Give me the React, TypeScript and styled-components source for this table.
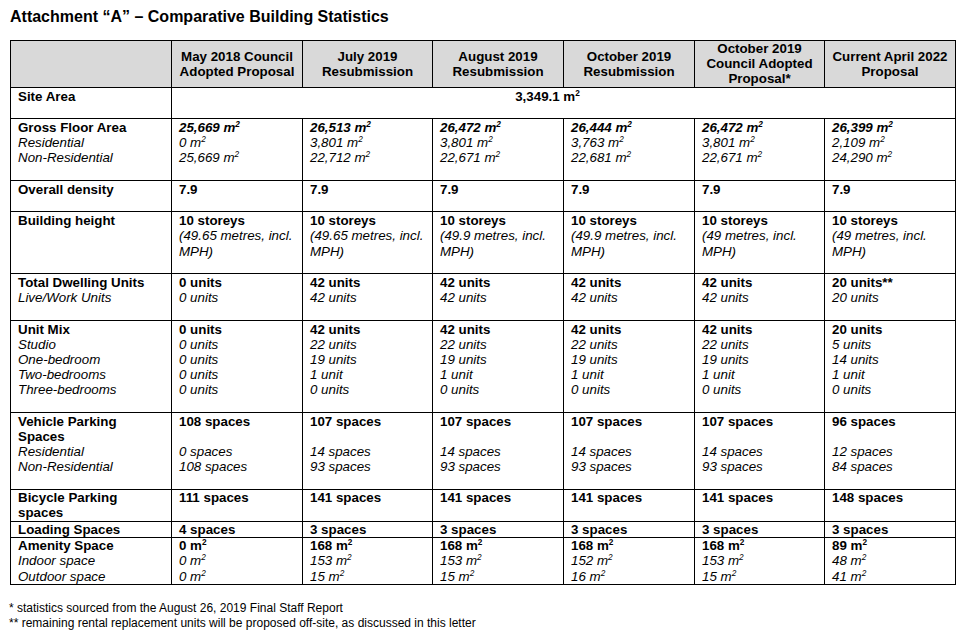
import { Fragment } from 'react';
import styled, { createGlobalStyle } from 'styled-components';

const GlobalStyle = createGlobalStyle`
  html, body {
    margin: 0;
    padding: 0;
    background: #ffffff;
  }
  body {
    font-family: 'Liberation Sans', Arial, sans-serif;
    color: #000000;
  }
`;

const Page = styled.div`
  padding: 8px 10px 0 10px;
  width: 966px;
  box-sizing: border-box;
`;

const Title = styled.h1`
  margin: 0 0 14px 0;
  font-size: 16px;
  line-height: 18px;
  font-weight: bold;
`;

const Table = styled.table`
  border-collapse: collapse;
  table-layout: fixed;
  width: 945px;
  font-size: 13.33px;
  line-height: 15.2px;
`;

const HeadCell = styled.th`
  background: #d9d9d9;
  border: 1px solid #000;
  padding: 0 6px;
  font-weight: bold;
  text-align: center;
  vertical-align: middle;
  white-space: nowrap;
`;

// spaced rows end with an empty line, as the source table does
const Cell = styled.td<{ $spaced?: boolean; $center?: boolean }>`
  border: 1px solid #000;
  padding: ${(p) => (p.$spaced ? '1px 7px 14.2px' : '0 7px 0.4px')};
  vertical-align: top;
  text-align: ${(p) => (p.$center ? 'center' : 'left')};
`;

const SiteValue = styled.span`
  display: inline-block;
  padding-right: 32px;
  font-weight: bold;
`;

const Line = styled.div<{ $bold?: boolean; $italic?: boolean }>`
  font-weight: ${(p) => (p.$bold ? 'bold' : 'normal')};
  font-style: ${(p) => (p.$italic ? 'italic' : 'normal')};
  min-height: 15.2px;
`;

const Sup = styled.sup`
  font-size: 0.62em;
  line-height: 0;
  vertical-align: 0.55em;
`;

const Notes = styled.div`
  margin-top: 16px;
  margin-left: -1px;
  font-size: 12px;
  line-height: 15px;
`;

// b = bold, i = italic, bi = bold italic, '' = blank line
type Style = 'b' | 'i' | 'bi' | '';
type Ln = [Style, string];

interface Row {
  label: Ln[];
  values: Ln[][];
  spaced?: boolean;
}

const same = (lines: Ln[]): Ln[][] => Array.from({ length: 6 }, () => lines);

const headers = [
  ['May 2018 Council', 'Adopted Proposal'],
  ['July 2019', 'Resubmission'],
  ['August 2019', 'Resubmission'],
  ['October 2019', 'Resubmission'],
  ['October 2019', 'Council Adopted', 'Proposal*'],
  ['Current April 2022', 'Proposal'],
];

const units = (top: string, a: string, b: string, c: string, d: string): Ln[] => [
  ['b', top],
  ['i', a],
  ['i', b],
  ['i', c],
  ['i', d],
];

const rows: Row[] = [
  {
    label: [
      ['b', 'Gross Floor Area'],
      ['i', 'Residential'],
      ['i', 'Non-Residential'],
    ],
    values: [
      [['bi', '25,669 m²'], ['i', '0 m²'], ['i', '25,669 m²']],
      [['bi', '26,513 m²'], ['i', '3,801 m²'], ['i', '22,712 m²']],
      [['bi', '26,472 m²'], ['i', '3,801 m²'], ['i', '22,671 m²']],
      [['bi', '26,444 m²'], ['i', '3,763 m²'], ['i', '22,681 m²']],
      [['bi', '26,472 m²'], ['i', '3,801 m²'], ['i', '22,671 m²']],
      [['bi', '26,399 m²'], ['i', '2,109 m²'], ['i', '24,290 m²']],
    ],
    spaced: true,
  },
  {
    label: [['b', 'Overall density']],
    values: same([['b', '7.9']]),
    spaced: true,
  },
  {
    label: [['b', 'Building height']],
    values: [
      [['b', '10 storeys'], ['i', '(49.65 metres, incl. MPH)']],
      [['b', '10 storeys'], ['i', '(49.65 metres, incl. MPH)']],
      [['b', '10 storeys'], ['i', '(49.9 metres, incl. MPH)']],
      [['b', '10 storeys'], ['i', '(49.9 metres, incl. MPH)']],
      [['b', '10 storeys'], ['i', '(49 metres, incl. MPH)']],
      [['b', '10 storeys'], ['i', '(49 metres, incl. MPH)']],
    ],
    spaced: true,
  },
  {
    label: [
      ['b', 'Total Dwelling Units'],
      ['i', 'Live/Work Units'],
    ],
    values: [
      [['b', '0 units'], ['i', '0 units']],
      [['b', '42 units'], ['i', '42 units']],
      [['b', '42 units'], ['i', '42 units']],
      [['b', '42 units'], ['i', '42 units']],
      [['b', '42 units'], ['i', '42 units']],
      [['b', '20 units**'], ['i', '20 units']],
    ],
    spaced: true,
  },
  {
    label: [
      ['b', 'Unit Mix'],
      ['i', 'Studio'],
      ['i', 'One-bedroom'],
      ['i', 'Two-bedrooms'],
      ['i', 'Three-bedrooms'],
    ],
    values: [
      units('0 units', '0 units', '0 units', '0 units', '0 units'),
      units('42 units', '22 units', '19 units', '1 unit', '0 units'),
      units('42 units', '22 units', '19 units', '1 unit', '0 units'),
      units('42 units', '22 units', '19 units', '1 unit', '0 units'),
      units('42 units', '22 units', '19 units', '1 unit', '0 units'),
      units('20 units', '5 units', '14 units', '1 unit', '0 units'),
    ],
    spaced: true,
  },
  {
    label: [
      ['b', 'Vehicle Parking Spaces'],
      ['i', 'Residential'],
      ['i', 'Non-Residential'],
    ],
    values: [
      [['b', '108 spaces'], ['', ''], ['i', '0 spaces'], ['i', '108 spaces']],
      [['b', '107 spaces'], ['', ''], ['i', '14 spaces'], ['i', '93 spaces']],
      [['b', '107 spaces'], ['', ''], ['i', '14 spaces'], ['i', '93 spaces']],
      [['b', '107 spaces'], ['', ''], ['i', '14 spaces'], ['i', '93 spaces']],
      [['b', '107 spaces'], ['', ''], ['i', '14 spaces'], ['i', '93 spaces']],
      [['b', '96 spaces'], ['', ''], ['i', '12 spaces'], ['i', '84 spaces']],
    ],
    spaced: true,
  },
  {
    label: [['b', 'Bicycle Parking spaces']],
    values: [
      [['b', '111 spaces']],
      [['b', '141 spaces']],
      [['b', '141 spaces']],
      [['b', '141 spaces']],
      [['b', '141 spaces']],
      [['b', '148 spaces']],
    ],
  },
  {
    label: [['b', 'Loading Spaces']],
    values: [
      [['b', '4 spaces']],
      [['b', '3 spaces']],
      [['b', '3 spaces']],
      [['b', '3 spaces']],
      [['b', '3 spaces']],
      [['b', '3 spaces']],
    ],
  },
  {
    label: [
      ['b', 'Amenity Space'],
      ['i', 'Indoor space'],
      ['i', 'Outdoor space'],
    ],
    values: [
      [['b', '0 m²'], ['i', '0 m²'], ['i', '0 m²']],
      [['b', '168 m²'], ['i', '153 m²'], ['i', '15 m²']],
      [['b', '168 m²'], ['i', '153 m²'], ['i', '15 m²']],
      [['b', '168 m²'], ['i', '152 m²'], ['i', '16 m²']],
      [['b', '168 m²'], ['i', '153 m²'], ['i', '15 m²']],
      [['b', '89 m²'], ['i', '48 m²'], ['i', '41 m²']],
    ],
  },
];

const colWidths = [161, 131, 130, 131, 131, 130, 131];

// turns the "²" into a raised small 2, as in the source document
const withSup = (text: string) => {
  const parts = text.split('²');
  return parts.map((part, i) => (
    <Fragment key={i}>
      {part}
      {i < parts.length - 1 && <Sup>2</Sup>}
    </Fragment>
  ));
};

const Lines = ({ lines }: { lines: Ln[] }) => (
  <>
    {lines.map(([style, text], i) => (
      <Line key={i} $bold={style.includes('b')} $italic={style.includes('i')}>
        {withSup(text)}
      </Line>
    ))}
  </>
);

const App = () => (
  <>
    <GlobalStyle />
    <Page>
      <Title>Attachment “A” – Comparative Building Statistics</Title>
      <Table>
        <colgroup>
          {colWidths.map((w, i) => (
            <col key={i} style={{ width: w }} />
          ))}
        </colgroup>
        <thead>
          <tr>
            <HeadCell />
            {headers.map((h, i) => (
              <HeadCell key={i}>
                {h.map((t, j) => (
                  <div key={j}>{t}</div>
                ))}
              </HeadCell>
            ))}
          </tr>
        </thead>
        <tbody>
          <tr>
            <Cell $spaced>
              <Line $bold>Site Area</Line>
            </Cell>
            <Cell colSpan={6} $center $spaced>
              <SiteValue>{withSup('3,349.1 m²')}</SiteValue>
            </Cell>
          </tr>
          {rows.map((row, i) => (
            <tr key={i}>
              <Cell $spaced={row.spaced}>
                <Lines lines={row.label} />
              </Cell>
              {row.values.map((v, j) => (
                <Cell key={j} $spaced={row.spaced}>
                  <Lines lines={v} />
                </Cell>
              ))}
            </tr>
          ))}
        </tbody>
      </Table>
      <Notes>
        <div>* statistics sourced from the August 26, 2019 Final Staff Report</div>
        <div>** remaining rental replacement units will be proposed off-site, as discussed in this letter</div>
      </Notes>
    </Page>
  </>
);

export default App;
